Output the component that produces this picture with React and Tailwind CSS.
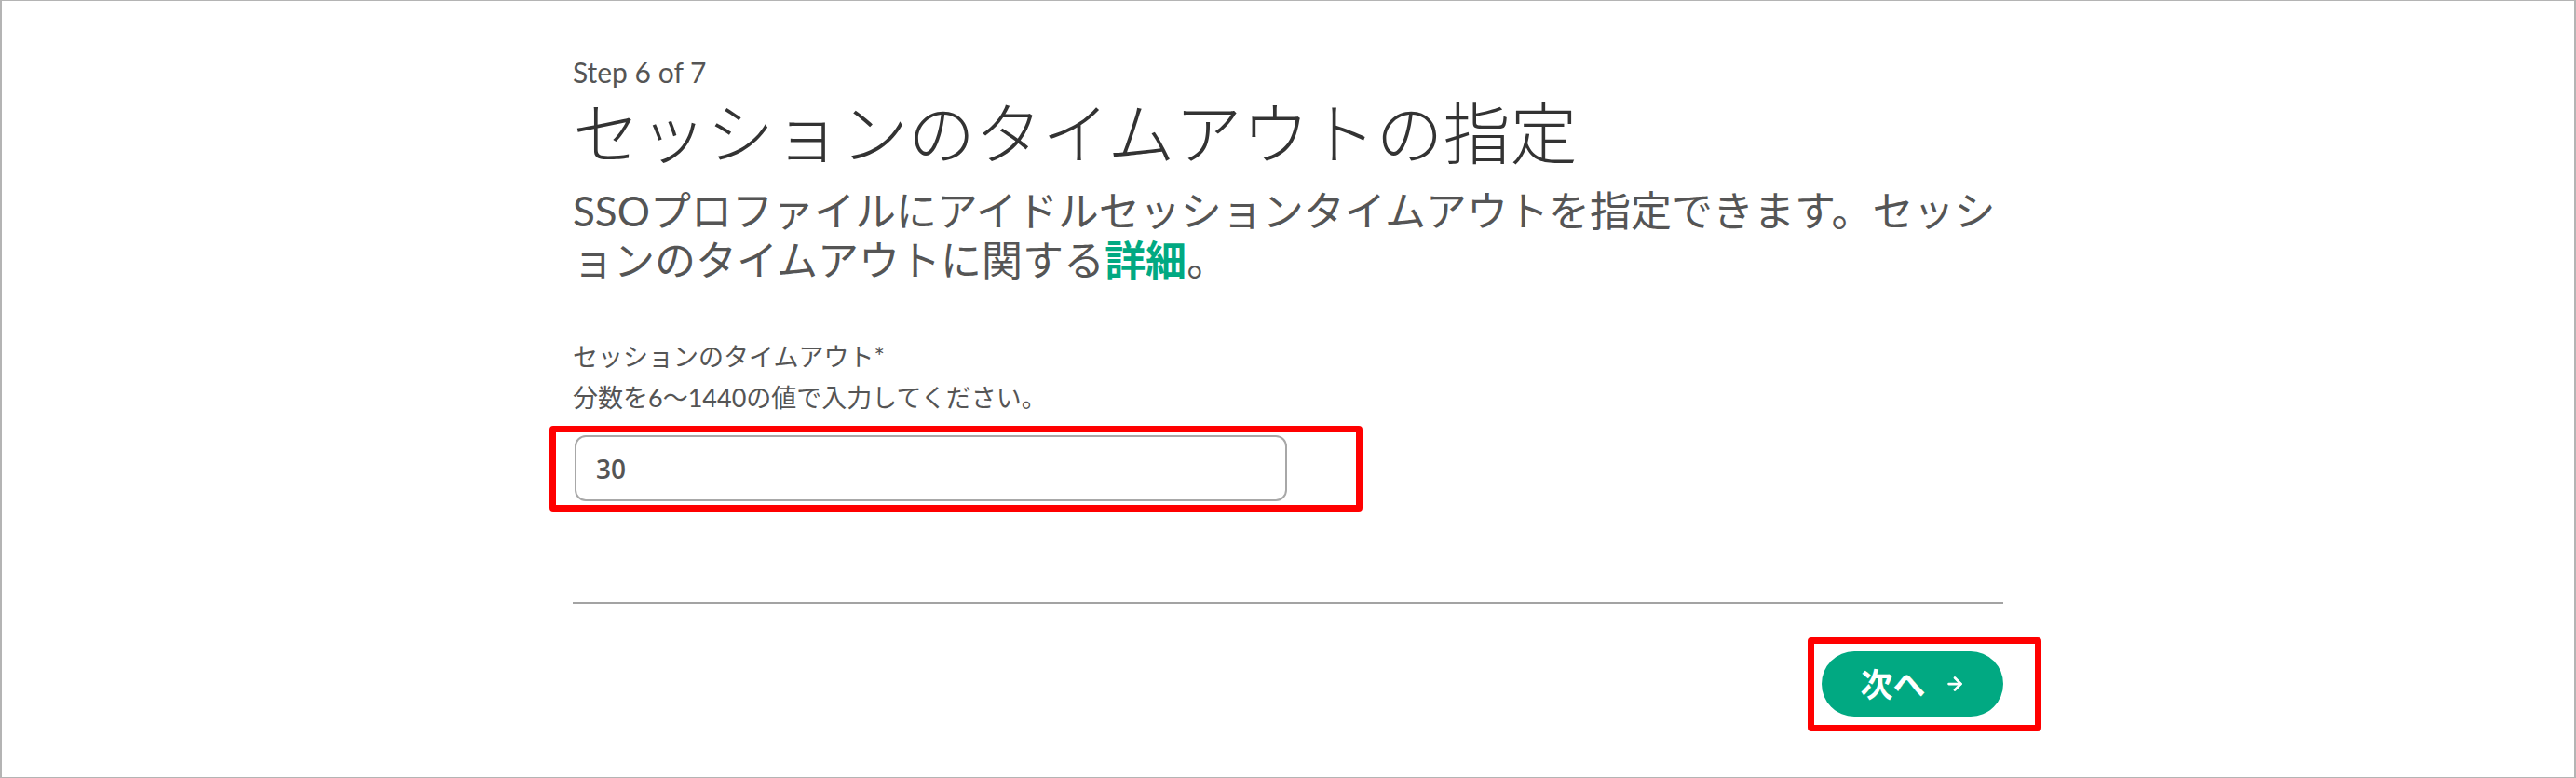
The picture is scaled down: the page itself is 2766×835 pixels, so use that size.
import { ArrowRight } from 'lucide-react'

const jp = { fontFamily: 'Lato, "Noto Sans CJK JP", sans-serif' }

export default function App() {
  return (
    <div
      className="h-[835px] w-full box-border border-x-2 border-y border-[#b4b4b4] bg-white flex justify-center"
      style={jp}
    >
      <div className="w-[1536px] pt-[58px] flex flex-col">
        <p className="text-[30px] leading-[36px] text-[#555]">Step 6 of 7</p>
        <h1 className="mt-[7px] text-[72px] leading-[80px] font-light text-[#333] whitespace-nowrap">
          セッションのタイムアウトの指定
        </h1>
        <p className="mt-[18px] text-[44px] leading-[53px] text-[#555]">
          SSOプロファイルにアイドルセッションタイムアウトを指定できます。セッションのタイムアウトに関する
          <a className="text-[#01a982] font-bold">詳細</a>。
        </p>

        {/* Field */}
        <div className="mt-[55px] text-[27px] leading-[44px] text-[#555]">
          <p>セッションのタイムアウト*</p>
          <p>分数を6〜1440の値で入力してください。</p>
        </div>
        <div className="mt-[8px] -ml-[25px] self-start border-[7px] border-[#ff0000] rounded-[4px] pl-[20px] pr-[74px] pt-[3px] pb-[4px]">
          <div className="w-[765px] h-[71px] border-2 border-[#a8a8a8] rounded-[12px] flex items-center px-[21px]">
            <span className="text-[28px] font-semibold text-[#555] font-['Open_Sans',sans-serif]">30</span>
          </div>
        </div>

        <div className="mt-[97px] h-[2px] bg-[#a3a3a3]" />

        <div className="mt-[36px] flex justify-end">
          <div className="-mr-[41px] border-[7px] border-[#ff0000] rounded-[4px] pl-[8px] pr-[34px] pt-[8px] pb-[9px]">
            <button className="h-[70px] w-[195px] rounded-full bg-[#01a982] text-white flex items-center justify-center gap-[20px]">
              <span className="text-[35px] font-bold leading-none">次へ</span>
              <ArrowRight className="w-[22px] h-[22px]" strokeWidth={3} />
            </button>
          </div>
        </div>
      </div>
    </div>
  )
}
